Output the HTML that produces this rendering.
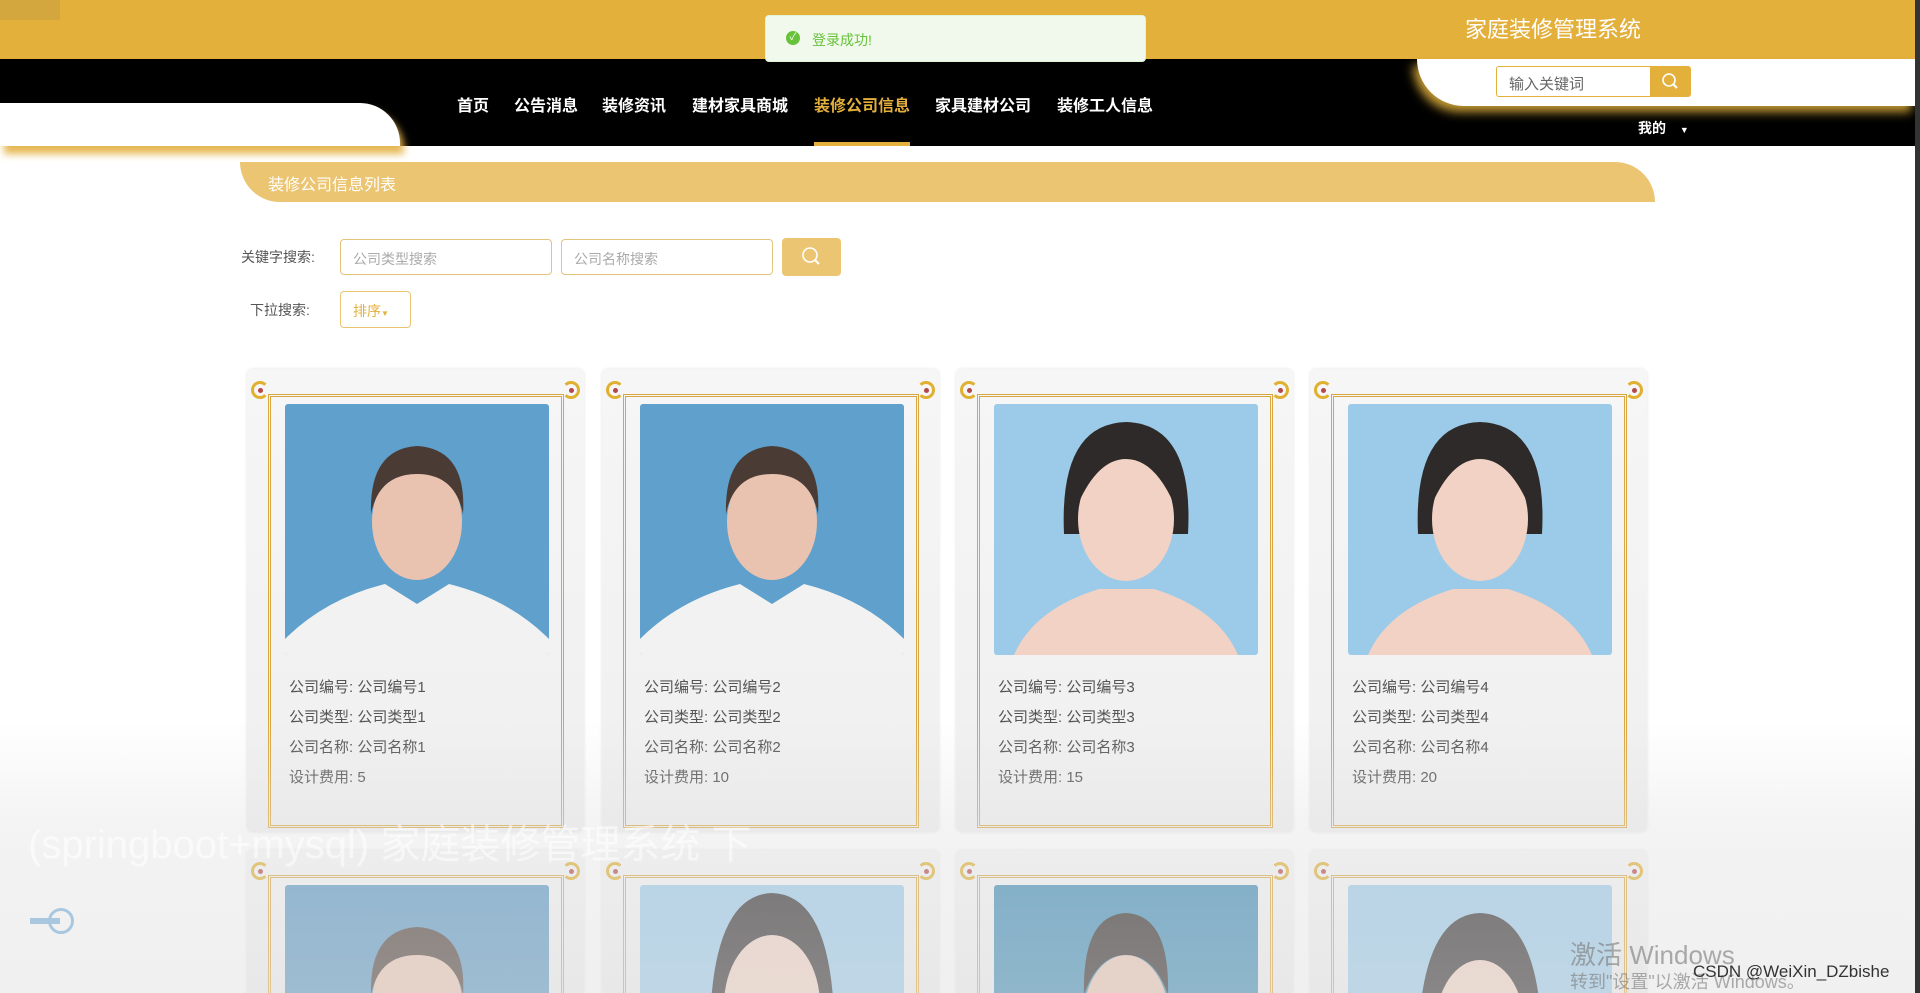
<!DOCTYPE html>
<html style="width:1920px;height:993px;overflow:hidden"><head><meta charset="utf-8">
<style>
*{margin:0;padding:0;box-sizing:border-box}
body{width:1920px;height:993px;overflow:hidden;background:#fff;font-family:"Liberation Sans","Noto Sans CJK SC",sans-serif;position:relative}
.abs{position:absolute}
.top{left:0;top:0;width:1920px;height:59px;background:#e4b03c}
.nav{left:0;top:59px;width:1920px;height:87px;background:#000}
.navi{top:92px;font-size:16px;font-weight:bold;color:#fff;white-space:nowrap}
.card{width:337px;height:463px;background:linear-gradient(#f6f6f6,#efefef);border-radius:6px;box-shadow:0 0 3px rgba(0,0,0,.12)}
.card.b{height:143px;overflow:hidden;border-radius:6px 6px 0 0}
.frame{position:absolute;left:21px;top:25px;width:296px;height:434px;border:3px double #d9a640;}
.photo{position:absolute;left:38px;top:35px;width:264px;height:251px;border-radius:3px;overflow:hidden}
.info{position:absolute;left:42px;top:304px;font-size:15px;color:#555;line-height:30px}
.orn{position:absolute;width:18px;height:18px;border:3px solid #e0b030;border-radius:50%;border-right-color:transparent}
.orn.r{border-right-color:#e0b030;border-left-color:transparent}
.orn::after{content:"";position:absolute;left:4px;top:4px;width:5px;height:5px;border-radius:50%;background:#b5484a}
</style></head><body>
<div class="abs top"></div>
<div class="abs" style="left:0;top:0;width:60px;height:20px;background:#d4a63e"></div>
<div class="abs" style="left:1465px;top:12px;font-size:22px;color:#fff">家庭装修管理系统</div>
<div class="abs nav"></div>
<div class="abs" style="left:1417px;top:59px;width:498px;height:47px;background:#fff;border-bottom-left-radius:50px;box-shadow:-4px 6px 10px #c49a34"></div>
<div class="abs" style="left:1496px;top:66px;width:155px;height:31px;border:1px solid #e4b03c;border-radius:3px 0 0 3px;background:#fff;font-size:15px;color:#666;padding:6px 12px">输入关键词</div>
<div class="abs" style="left:1650px;top:66px;width:41px;height:31px;background:#e4b03c;border-radius:0 3px 3px 0">
<svg width="41" height="31"><circle cx="19" cy="14" r="6" fill="none" stroke="#fff" stroke-width="1.6"/><line x1="23" y1="18" x2="27" y2="22" stroke="#fff" stroke-width="2"/></svg></div>
<div class="abs" style="left:1638px;top:118px;font-size:14px;font-weight:bold;color:#fff">我的 <span style="font-size:9px;margin-left:10px">▼</span></div>
<div class="abs" style="left:1915px;top:0;width:5px;height:993px;background:#333"></div>
<div class="abs" style="left:0;top:103px;width:400px;height:43px;background:#fff;border-top-right-radius:40px;box-shadow:4px 8px 8px #e6b752"></div>
<div class="abs navi" style="left:457px">首页</div>
<div class="abs navi" style="left:514px">公告消息</div>
<div class="abs navi" style="left:602px">装修资讯</div>
<div class="abs navi" style="left:692px">建材家具商城</div>
<div class="abs navi" style="left:814px;color:#e4b03c">装修公司信息</div>
<div class="abs navi" style="left:935px">家具建材公司</div>
<div class="abs navi" style="left:1057px">装修工人信息</div>
<div class="abs" style="left:814px;top:142px;width:96px;height:4px;background:#e4b03c"></div>
<div class="abs" style="left:765px;top:15px;width:381px;height:47px;background:#f0f9eb;border:1px solid #e1f3d8;border-radius:4px"></div>
<div class="abs" style="left:786px;top:31px;width:14px;height:14px;border-radius:50%;background:#67c23a;color:#fff;font-size:10px;text-align:center;line-height:14px">✓</div>
<div class="abs" style="left:812px;top:30px;font-size:14px;color:#67c23a">登录成功!</div>

<div class="abs" style="left:240px;top:162px;width:1415px;height:40px;background:#ebc572;border-radius:0 40px 0 40px"></div>
<div class="abs" style="left:268px;top:171px;font-size:16px;color:#fff">装修公司信息列表</div>
<div class="abs" style="left:241px;top:247px;font-size:14px;color:#555">关键字搜索:</div>
<div class="abs" style="left:340px;top:239px;width:212px;height:36px;border:1px solid #e4c47a;border-radius:4px;font-size:14px;color:#aaa;padding:9px 12px">公司类型搜索</div>
<div class="abs" style="left:561px;top:239px;width:212px;height:36px;border:1px solid #e4c47a;border-radius:4px;font-size:14px;color:#aaa;padding:9px 12px">公司名称搜索</div>
<div class="abs" style="left:782px;top:238px;width:59px;height:38px;background:#ebc572;border-radius:4px">
<svg width="59" height="38"><circle cx="28" cy="17" r="7" fill="none" stroke="#fff" stroke-width="1.6"/><line x1="33" y1="22" x2="37" y2="26" stroke="#fff" stroke-width="2"/></svg></div>
<div class="abs" style="left:250px;top:300px;font-size:14px;color:#555">下拉搜索:</div>
<div class="abs" style="left:340px;top:291px;width:71px;height:37px;border:1px solid #ebc572;border-radius:4px;font-size:14px;color:#e4b03c;padding:9px 12px">排序<span style="font-size:8px">▼</span></div>

<div class="abs card" style="left:247px;top:369px"><div class="frame"></div><div class="orn" style="left:4px;top:12px"></div><div class="orn r" style="right:4px;top:12px"></div>
<svg class="photo" viewBox="0 0 264 251"><rect width="264" height="251" fill="#5fa0cc"/><ellipse cx="132" cy="118" rx="45" ry="58" fill="#e9c3b0"/><path d="M86 110 Q84 45 132 42 Q182 45 178 110 Q170 70 132 70 Q94 70 86 110Z" fill="#4a3b35"/><path d="M0 235 Q40 195 100 180 L132 200 L164 180 Q224 195 264 235 L264 251 L0 251Z" fill="#f2f2f2"/></svg>
<div class="info">公司编号: 公司编号1<br>公司类型: 公司类型1<br>公司名称: 公司名称1<br>设计费用: 5</div></div>
<div class="abs card" style="left:602px;top:369px"><div class="frame"></div><div class="orn" style="left:4px;top:12px"></div><div class="orn r" style="right:4px;top:12px"></div>
<svg class="photo" viewBox="0 0 264 251"><rect width="264" height="251" fill="#5fa0cc"/><ellipse cx="132" cy="118" rx="45" ry="58" fill="#e9c3b0"/><path d="M86 110 Q84 45 132 42 Q182 45 178 110 Q170 70 132 70 Q94 70 86 110Z" fill="#4a3b35"/><path d="M0 235 Q40 195 100 180 L132 200 L164 180 Q224 195 264 235 L264 251 L0 251Z" fill="#f2f2f2"/></svg>
<div class="info">公司编号: 公司编号2<br>公司类型: 公司类型2<br>公司名称: 公司名称2<br>设计费用: 10</div></div>
<div class="abs card" style="left:956px;top:369px"><div class="frame"></div><div class="orn" style="left:4px;top:12px"></div><div class="orn r" style="right:4px;top:12px"></div>
<svg class="photo" viewBox="0 0 264 251"><rect width="264" height="251" fill="#9ccbea"/><path d="M70 130 Q65 20 132 18 Q200 20 194 130Z" fill="#2e2a2a"/><ellipse cx="132" cy="115" rx="48" ry="62" fill="#f1d2c4"/><path d="M84 100 Q90 40 132 38 Q176 40 180 100 Q160 55 132 55 Q104 55 84 100Z" fill="#2e2a2a"/><path d="M20 251 Q40 205 105 185 L160 185 Q224 205 244 251Z" fill="#f1d2c4"/></svg>
<div class="info">公司编号: 公司编号3<br>公司类型: 公司类型3<br>公司名称: 公司名称3<br>设计费用: 15</div></div>
<div class="abs card" style="left:1310px;top:369px"><div class="frame"></div><div class="orn" style="left:4px;top:12px"></div><div class="orn r" style="right:4px;top:12px"></div>
<svg class="photo" viewBox="0 0 264 251"><rect width="264" height="251" fill="#9ccbea"/><path d="M70 130 Q65 20 132 18 Q200 20 194 130Z" fill="#2e2a2a"/><ellipse cx="132" cy="115" rx="48" ry="62" fill="#f1d2c4"/><path d="M84 100 Q90 40 132 38 Q176 40 180 100 Q160 55 132 55 Q104 55 84 100Z" fill="#2e2a2a"/><path d="M20 251 Q40 205 105 185 L160 185 Q224 205 244 251Z" fill="#f1d2c4"/></svg>
<div class="info">公司编号: 公司编号4<br>公司类型: 公司类型4<br>公司名称: 公司名称4<br>设计费用: 20</div></div>

<div class="abs card b" style="left:247px;top:850px"><div class="frame"></div><div class="orn" style="left:4px;top:12px"></div><div class="orn r" style="right:4px;top:12px"></div>
<svg class="photo" viewBox="0 0 264 251"><rect width="264" height="251" fill="#5a97c2"/><ellipse cx="132" cy="118" rx="45" ry="58" fill="#e9c3b0"/><path d="M86 110 Q84 45 132 42 Q182 45 178 110 Q170 70 132 70 Q94 70 86 110Z" fill="#4a3b35"/></svg></div>
<div class="abs card b" style="left:602px;top:850px"><div class="frame"></div><div class="orn" style="left:4px;top:12px"></div><div class="orn r" style="right:4px;top:12px"></div>
<svg class="photo" viewBox="0 0 264 251"><rect width="264" height="251" fill="#9ccbea"/><path d="M70 180 Q65 10 132 8 Q200 10 194 180Z" fill="#2e2a2a"/><ellipse cx="132" cy="120" rx="48" ry="70" fill="#f1d2c4"/></svg></div>
<div class="abs card b" style="left:956px;top:850px"><div class="frame"></div><div class="orn" style="left:4px;top:12px"></div><div class="orn r" style="right:4px;top:12px"></div>
<svg class="photo" viewBox="0 0 264 251"><rect width="264" height="251" fill="#3d8bb5"/><ellipse cx="132" cy="130" rx="42" ry="60" fill="#e9c3b0"/><path d="M90 110 Q88 30 132 28 Q176 30 174 110 Q160 70 132 70 Q104 70 90 110Z" fill="#2a2422"/></svg></div>
<div class="abs card b" style="left:1310px;top:850px"><div class="frame"></div><div class="orn" style="left:4px;top:12px"></div><div class="orn r" style="right:4px;top:12px"></div>
<svg class="photo" viewBox="0 0 264 251"><rect width="264" height="251" fill="#9ccbea"/><path d="M70 200 Q65 30 132 28 Q200 30 194 200Z" fill="#2e2a2a"/><ellipse cx="132" cy="140" rx="44" ry="65" fill="#f1d2c4"/></svg></div>

<div class="abs" style="left:0;top:720px;width:1915px;height:273px;background:linear-gradient(rgba(225,225,225,0),rgba(225,225,225,.4) 40%,rgba(225,225,225,.5))"></div>
<div class="abs" style="left:28px;top:812px;font-size:40px;color:rgba(255,255,255,.55)">(springboot+mysql) 家庭装修管理系统 下</div>
<div class="abs" style="left:30px;top:918px;width:30px;height:6px;background:#a9c8e0"></div>
<div class="abs" style="left:48px;top:908px;width:26px;height:26px;border:3px solid #a9c8e0;border-radius:50%"></div>
<div class="abs" style="left:1570px;top:935px;font-size:26px;color:rgba(120,120,120,.6)">激活 Windows</div>
<div class="abs" style="left:1570px;top:968px;font-size:18px;color:rgba(120,120,120,.6)">转到"设置"以激活 Windows。</div>
<div class="abs" style="left:1693px;top:962px;font-size:17px;color:#333">CSDN @WeiXin_DZbishe</div>
</body></html>
